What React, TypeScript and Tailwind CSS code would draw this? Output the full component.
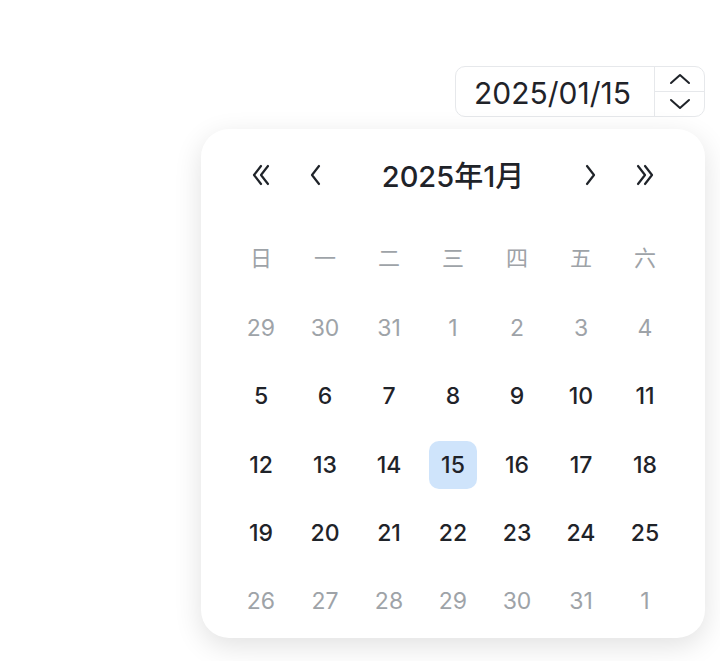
import React from 'react';

const weekdays = ['日', '一', '二', '三', '四', '五', '六'];

type Day = { n: number; muted?: boolean; selected?: boolean };

// first and last rows are shown greyed out
const buildDays = (): Day[] => {
  const days: Day[] = [29, 30, 31].map((n) => ({ n, muted: true }));
  for (let i = 1; i <= 31; i++) days.push({ n: i, selected: i === 15, muted: i <= 4 || i >= 26 });
  days.push({ n: 1, muted: true });
  return days;
};

const Chevron = ({ dir, double }: { dir: 'left' | 'right'; double?: boolean }) => {
  const flip = dir === 'right' ? 'scale(-1,1) translate(-24,0)' : undefined;
  return (
    <svg width="24" height="24" viewBox="0 0 24 24" fill="none" stroke="#1f2329" strokeWidth="2.2" strokeLinecap="round" strokeLinejoin="round">
      <g transform={flip}>
        {double ? (
          <>
            <path d="M12 3 5 12l7 9" />
            <path d="M19 3 12 12l7 9" />
          </>
        ) : (
          <path d="M16 3 9 12l7 9" />
        )}
      </g>
    </svg>
  );
};

export default function App() {
  const days = buildDays();
  const font = { fontFamily: 'Inter, "Noto Sans CJK SC", sans-serif' };

  return (
    <div className="w-full h-[661px] bg-white overflow-hidden flex flex-col items-end pr-[15px] pt-[66px]" style={font}>
      {/* input with spinner */}
      <div className="w-[250px] h-[51px] flex border border-[#e6e8eb] rounded-[10px] bg-white">
        <div className="flex-1 flex items-center pl-[18px] pt-[2px] text-[30px] text-[#1f2329] leading-none">2025/01/15</div>
        <div className="w-[50px] flex flex-col border-l border-[#e6e8eb]">
          <div className="flex-1 flex items-center justify-center border-b border-[#e6e8eb]">
            <svg width="22" height="12" viewBox="0 0 22 12" fill="none" stroke="#1f2329" strokeWidth="2" strokeLinecap="round" strokeLinejoin="round">
              <path d="M2 10 11 2l9 8" />
            </svg>
          </div>
          <div className="flex-1 flex items-center justify-center">
            <svg width="22" height="12" viewBox="0 0 22 12" fill="none" stroke="#1f2329" strokeWidth="2" strokeLinecap="round" strokeLinejoin="round">
              <path d="M2 2l9 8 9-8" />
            </svg>
          </div>
        </div>
      </div>

      {/* calendar popup */}
      <div className="mt-[12px] w-[504px] h-[509px] bg-white rounded-[28px] shadow-[0_8px_28px_rgba(0,0,0,0.12)] px-[28px] pt-[22px]">
        <div className="h-[48px] flex items-center">
          <div className="w-[64px] flex justify-center"><Chevron dir="left" double /></div>
          <div className="w-[44px] flex justify-center"><Chevron dir="left" /></div>
          <div className="flex-1 text-center text-[29px] font-medium text-[#1f2329] leading-none pt-[2px]">2025年1月</div>
          <div className="w-[44px] flex justify-center"><Chevron dir="right" /></div>
          <div className="w-[64px] flex justify-center"><Chevron dir="right" double /></div>
        </div>
        <div className="mt-[23px] grid grid-cols-7">
          {weekdays.map((w) => (
            <div key={w} className="h-[68.4px] flex items-center justify-center text-[22px] text-[#9ea3a8]" style={{ fontFamily: '"Noto Sans CJK SC", sans-serif' }}>{w}</div>
          ))}
          {days.map((d, i) => (
            <div key={i} className="h-[68.4px] flex items-center justify-center pt-[7px]">
              <div
                className={
                  'w-[48px] h-[48px] rounded-[10px] flex items-center justify-center text-[23px] ' +
                  (d.selected ? 'bg-[#cfe4fb] ' : '') +
                  (d.muted ? 'text-[#9ea3a8]' : 'text-[#1f2329] font-medium')
                }
              >
                {d.n}
              </div>
            </div>
          ))}
        </div>
      </div>
    </div>
  );
}
